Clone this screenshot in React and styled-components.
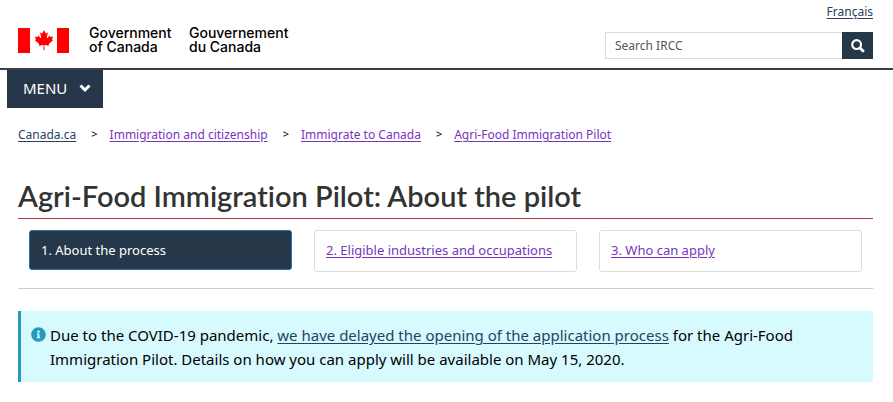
import React from "react";
import styled, { createGlobalStyle } from "styled-components";
import { FaCanadianMapleLeaf, FaInfoCircle } from "react-icons/fa";

const navy = "#26374a";
const linkBlue = "#284162";
const visited = "#7834bc";

const GlobalStyle = createGlobalStyle`
  *, *::before, *::after { box-sizing: border-box; }
  body {
    margin: 0;
    background: #fff;
    color: #000;
    font: 15px/24px "Noto Sans", sans-serif;
  }
`;

const Header = styled.header`
  display: flex;
  justify-content: space-between;
  align-items: flex-start;
  height: 70px;
  padding: 0 20px 0 18px;
  border-bottom: 2px solid #38414d;
`;

const Brand = styled.a`
  display: flex;
  align-items: center;
  gap: 20px;
  padding-top: 26px;
  color: #000;
  text-decoration: none;
`;

const Flag = styled.span`
  display: flex;
  align-items: center;
  justify-content: center;
  width: 51px;
  height: 25px;
  border: solid #f00;
  border-width: 0 12px;
  color: #f00;
  font-size: 20px;
`;

const BrandName = styled.span`
  display: flex;
  flex-direction: column;
  width: 80px;
  font: 500 14px/14px Inter, "Liberation Sans", sans-serif;
  white-space: nowrap;
`;

const Tools = styled.div`
  display: flex;
  flex-direction: column;
  align-items: flex-end;
  gap: 8px;
`;

const TextLink = styled.a`
  color: ${(p) => (p.$visited ? visited : linkBlue)};
  text-underline-offset: 2px;
`;

const Language = styled(TextLink)`
  font-size: 12px;
`;

const Search = styled.form`
  display: flex;
  width: 268px;
  height: 27px;
`;

const SearchInput = styled.input`
  flex: 1;
  min-width: 0;
  padding: 0 9px;
  border: 1px solid #ddd;
  border-right: 0;
  border-radius: 0;
  font: 12px "Noto Sans", sans-serif;
  &::placeholder { color: #555; opacity: 1; }
`;

const SearchButton = styled.button`
  display: flex;
  align-items: center;
  justify-content: center;
  width: 31px;
  padding: 0;
  border: 0;
  background: ${navy};
  color: #fff;
`;

const MenuButton = styled.button`
  display: flex;
  align-items: center;
  gap: 12px;
  height: 38px;
  margin-left: 7px;
  padding: 0 12px 2px 16px;
  border: 0;
  background: ${navy};
  color: #fff;
  font: 15px "Noto Sans", sans-serif;
`;

const Page = styled.main`
  padding: 0 20px 0 18px;
`;

const Crumbs = styled.ol`
  display: flex;
  margin: 0;
  padding: 15px 20px 0 18px;
  list-style: none;
  font-size: 12px;
`;

const Crumb = styled.li`
  display: flex;
  & + &::before {
    content: ">";
    margin: 0 12px 0 15px;
    font-size: 11px;
    line-height: 22px;
  }
`;

const Title = styled.h1`
  margin: 30px 0 11px;
  padding-bottom: 4px;
  border-bottom: 1px solid #af3c43;
  color: #333;
  font: 600 29px/37px Lato, sans-serif;
  font-variant-ligatures: none;
`;

const Steps = styled.ul`
  display: grid;
  grid-template-columns: repeat(3, 1fr);
  align-items: start;
  gap: 22px;
  margin: 0;
  padding: 0 11px 16px;
  border-bottom: 1px solid #ccc;
  list-style: none;
  font-size: 13px;
`;

const Step = styled.a`
  display: block;
  padding: ${(p) => (p.$current ? "7px 11px" : "7px 11px 9px")};
  border: 1px solid ${(p) => (p.$current ? "#2572b4" : "#ddd")};
  border-radius: 3px;
  background: ${(p) => (p.$current ? navy : "#fff")};
  color: ${(p) => (p.$current ? "#fff" : visited)};
  text-decoration: ${(p) => (p.$current ? "none" : "underline")};
  text-underline-offset: 2px;
`;

const Alert = styled.section`
  display: flex;
  gap: 4px;
  margin-top: 22px;
  padding: 12px 60px 11px 10px;
  border-left: 3px solid #269abc;
  background: #d7faff;
  svg {
    flex: none;
    margin-top: 4px;
    color: #269abc;
    font-size: 15px;
  }
  p { margin: 0; }
`;

const crumbs = [
  ["Canada.ca", false],
  ["Immigration and citizenship", true],
  ["Immigrate to Canada", true],
  ["Agri-Food Immigration Pilot", true],
];

const steps = ["1. About the process", "2. Eligible industries and occupations", "3. Who can apply"];

export default function App() {
  return (
    <>
      <GlobalStyle />
      <Header>
        <Brand href="#">
          <Flag><FaCanadianMapleLeaf aria-hidden="true" /></Flag>
          <BrandName><span>Government</span><span>of Canada</span></BrandName>
          <BrandName lang="fr"><span>Gouvernement</span><span>du Canada</span></BrandName>
        </Brand>
        <Tools>
          <Language href="#" lang="fr">Français</Language>
          <Search role="search" onSubmit={(e) => e.preventDefault()}>
            <SearchInput type="search" aria-label="Search IRCC" placeholder="Search IRCC" />
            <SearchButton type="submit" aria-label="Search">
              <svg width="14" height="14" viewBox="0 0 14 14" fill="none" stroke="currentColor" aria-hidden="true">
                <circle cx="5.6" cy="5.6" r="4.4" strokeWidth="2.2" />
                <path d="M9 9l3.8 3.8" strokeWidth="2.8" />
              </svg>
            </SearchButton>
          </Search>
        </Tools>
      </Header>
      <MenuButton type="button" aria-haspopup="true">
        MENU
        <svg width="12" height="12" viewBox="0 0 12 12" fill="none" stroke="currentColor" strokeWidth="3" aria-hidden="true">
          <path d="M1.5 3.5L6 8l4.5-4.5" />
        </svg>
      </MenuButton>
      <nav aria-label="Breadcrumb">
        <Crumbs>
          {crumbs.map(([label, seen]) => (
            <Crumb key={label}><TextLink href="#" $visited={seen}>{label}</TextLink></Crumb>
          ))}
        </Crumbs>
      </nav>
      <Page>
        <Title>Agri-Food Immigration Pilot: About the pilot</Title>
        <Steps>
          {steps.map((label, i) => (
            <li key={label}>
              <Step href="#" $current={i === 0} aria-current={i === 0 ? "page" : undefined}>{label}</Step>
            </li>
          ))}
        </Steps>
        <Alert>
          <FaInfoCircle aria-hidden="true" />
          <p>
            Due to the COVID-19 pandemic,{" "}
            <TextLink href="#">we have delayed the opening of the application process</TextLink>{" "}
            for the Agri-Food Immigration Pilot. Details on how you can apply will be available on May 15, 2020.
          </p>
        </Alert>
      </Page>
    </>
  );
}
